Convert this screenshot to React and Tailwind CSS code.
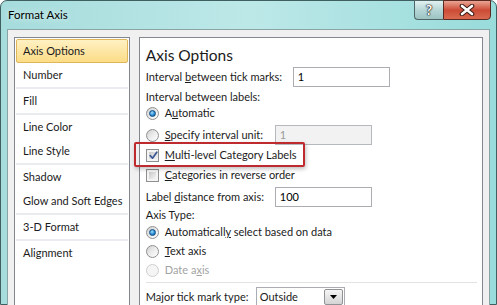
import React from "react";

const F = "font-['Lato',sans-serif]";

function Radio({ checked, disabled }) {
  return (
    <span
      className={
        disabled
          ? "w-[13px] h-[13px] rounded-full border border-[#cfcfcf] bg-[#f5f5f5] flex items-center justify-center shrink-0"
          : "w-[13px] h-[13px] rounded-full border border-[#8e8f8f] bg-gradient-to-br from-[#cfcfcf] via-[#ececec] to-[#ffffff] flex items-center justify-center shrink-0"
      }
    >
      {checked && (
        <span className="w-[7px] h-[7px] rounded-full border border-[#0f4f86] bg-[radial-gradient(circle_at_40%_35%,#9fe0ff,#2c8ad0_55%,#0d5a9a)]" />
      )}
    </span>
  );
}

function Check({ checked }) {
  return (
    <span className="w-[13px] h-[13px] border border-[#8e8f8f] bg-[#f4f4f4] p-[2px] flex shrink-0">
      <span className="flex-1 bg-gradient-to-br from-[#c9c9c9] to-[#f5f5f5] flex items-center justify-center">
        {checked && (
          <svg width="9" height="9" viewBox="0 0 9 9" className="overflow-visible">
            <path d="M1.2 4.6 L3.5 7.2 L7.8 1.2" fill="none" stroke="#3c5796" strokeWidth="1.7" strokeLinecap="round" strokeLinejoin="round" />
          </svg>
        )}
      </span>
    </span>
  );
}

function Input({ value, disabled }) {
  return (
    <div
      className={
        disabled
          ? "w-[97px] h-[20px] border border-[#b5b9bd] bg-[#f2f2f2] text-[#9a9a9a] pl-[4px] flex items-center shrink-0"
          : "w-[97px] h-[20px] border border-[#abadb3] bg-white text-black pl-[4px] flex items-center shrink-0"
      }
    >
      {value}
    </div>
  );
}

const listItems = [
  { t: "Axis Options", sel: true },
  { t: "Number", sepAfter: true },
  { t: "Fill", sepAfter: true },
  { t: "Line Color" },
  { t: "Line Style", sepAfter: true },
  { t: "Shadow" },
  { t: "Glow and Soft Edges", sepAfter: true },
  { t: "3-D Format", sepAfter: true },
  { t: "Alignment" },
];

function CloseX() {
  return (
    <svg width="16" height="12" viewBox="0 0 16 12">
      <path d="M3 2 L13 10 M13 2 L3 10" stroke="#3a1a14" strokeWidth="4.6" strokeLinecap="round" />
      <path d="M3 2 L13 10 M13 2 L3 10" stroke="#ffffff" strokeWidth="2.6" strokeLinecap="round" />
    </svg>
  );
}

export default function App() {
  return (
    <div className={`${F} relative w-[497px] h-[305px] overflow-hidden bg-white`}>
      <div className="w-[497px] h-[305px] rounded-t-[7px] border border-[#3f5f60] bg-gradient-to-r from-[#a6dcdc] via-[#bde8e8] to-[#98dcdb] flex flex-col">
        {/* Title bar */}
        <div className="h-[28px] flex items-start shrink-0">
          <div className="pl-[7px] pt-[6px] text-[11.5px] leading-[16px] text-black whitespace-nowrap [text-shadow:0_0_6px_rgba(255,255,255,0.9)]">
            Format Axis
          </div>
          <div className="ml-auto mr-[5px] flex -mt-[1px]">
            <div className="w-[29px] h-[20px] border border-[#4e6565] border-r-0 rounded-bl-[4px] bg-gradient-to-b from-[#e2f1f1] via-[#b6d6d6] to-[#9cc3c3] flex items-center justify-center">
              <span className="text-white font-bold text-[14px] leading-none [text-shadow:0_0_1px_#000,0_0_1px_#000,0_0_2px_#333]">?</span>
            </div>
            <div className="w-[48px] h-[20px] border border-[#5a2a22] rounded-br-[4px] bg-gradient-to-b from-[#e8a494] via-[#cc4b36] to-[#d86a50] flex items-center justify-center">
              <CloseX />
            </div>
          </div>
        </div>

        {/* Client area */}
        <div className="ml-[6px] mr-[6px] flex-1 border border-[#8aa3a4] bg-[#f0f0f0] flex items-start pl-[6px] pt-[7px] pr-[6px] gap-[9px] text-[11px] text-[#1b1b1b] whitespace-nowrap">
          {/* Left list */}
          <div className="w-[116px] h-[290px] border border-[#828790] bg-white p-[1px] flex flex-col">
            {listItems.map((it) => (
              <React.Fragment key={it.t}>
                <div
                  className={
                    it.sel
                      ? "h-[24px] flex items-center pl-[6px] rounded-[2px] border border-[#dfb65a] bg-gradient-to-b from-[#fff1c2] to-[#fcdc86]"
                      : "h-[24px] flex items-center pl-[7px]"
                  }
                >
                  {it.t}
                </div>
                {it.sepAfter && <div className="h-[2px] bg-[#eaecf0]" />}
              </React.Fragment>
            ))}
          </div>

          {/* Right panel */}
          <div className="w-[345px] h-[290px] border border-[#828790] bg-white pl-[6px] pt-[6px] flex flex-col">
            <div className="h-[23px] text-[15.5px] leading-[22px] text-[#1b1b1b]">Axis Options</div>

            <div className="h-[20px] flex items-center">
              <span className="w-[147px] shrink-0">
                Interval <span className="underline">b</span>etween tick marks:
              </span>
              <Input value="1" />
            </div>

            <div className="h-[16px] mt-[2px] flex items-center">Interval between labels:</div>

            <div className="h-[16px] flex items-center gap-[6px]">
              <Radio checked />
              <span>
                A<span className="underline">u</span>tomatic
              </span>
            </div>

            <div className="h-[20px] mt-[4px] flex items-center">
              <span className="w-[129px] flex items-center gap-[6px] shrink-0">
                <Radio />
                <span>
                  <span className="underline">S</span>pecify interval unit:
                </span>
              </span>
              <Input value="1" disabled />
            </div>

            <div className="h-[16px] mt-[2px] flex items-center gap-[6px]">
              <Check checked />
              <span>
                <span className="underline">M</span>ulti-level Category Labels
              </span>
            </div>

            <div className="h-[16px] mt-[4px] flex items-center gap-[6px]">
              <Check />
              <span>
                <span className="underline">C</span>ategories in reverse order
              </span>
            </div>

            <div className="h-[20px] mt-[4px] flex items-center">
              <span className="w-[129px] shrink-0">
                Label <span className="underline">d</span>istance from axis:
              </span>
              <Input value="100" />
            </div>

            <div className="h-[16px] flex items-center">Axis Type:</div>

            <div className="h-[16px] mt-[1px] flex items-center gap-[6px]">
              <Radio checked />
              <span>
                Automaticall<span className="underline">y</span> select based on data
              </span>
            </div>

            <div className="h-[16px] mt-[3px] flex items-center gap-[6px]">
              <Radio />
              <span>
                <span className="underline">T</span>ext axis
              </span>
            </div>

            <div className="h-[16px] mt-[3px] flex items-center gap-[6px] text-[#a3a3a3]">
              <Radio disabled />
              <span>
                Date a<span className="underline">x</span>is
              </span>
            </div>

            <div className="h-[1px] mt-[4px] mr-[5px] bg-[#e2e2e2]" />

            <div className="h-[20px] mt-[4px] flex items-center">
              <span className="w-[110px] shrink-0">
                Ma<span className="underline">j</span>or tick mark type:
              </span>
              <div className="w-[89px] h-[20px] border border-[#abadb3] bg-white flex items-center pl-[3px] pr-[1px]">
                <span className="flex-1">Outside</span>
                <span className="w-[19px] h-[16px] border border-[#8f9396] rounded-[2px] bg-gradient-to-b from-[#f6f6f6] to-[#d4d4d4] flex items-center justify-center">
                  <svg width="7" height="4" viewBox="0 0 7 4">
                    <path d="M0 0 L7 0 L3.5 4 Z" fill="#000" />
                  </svg>
                </span>
              </div>
            </div>
          </div>
        </div>
      </div>

      {/* Red highlight annotation */}
      <div className="absolute left-[134px] top-[142px] w-[171px] h-[25px] border-2 border-[#bf2a2e] rounded-[2px] shadow-[1px_2px_4px_rgba(0,0,0,0.25)]" />
    </div>
  );
}
